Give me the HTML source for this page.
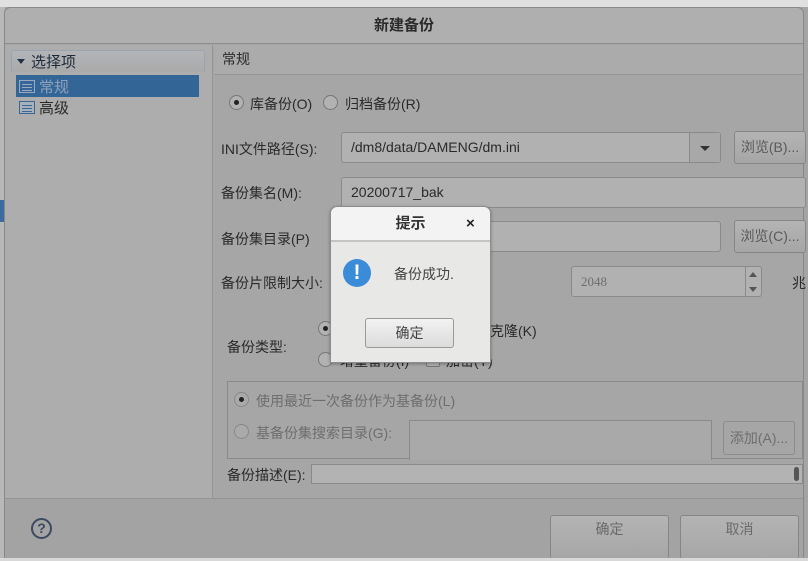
<!DOCTYPE html>
<html><head><meta charset="utf-8"><style>
*{box-sizing:border-box;margin:0;padding:0}
body{width:808px;height:561px;overflow:hidden;background:#a4a4a4;font-family:"Liberation Sans","Noto Sans CJK SC",sans-serif;font-size:14px;color:#2a2a2a;position:relative}
.a{position:absolute}
.field{position:absolute;background:#b1b1b1;border:1px solid #8a8a8a;border-radius:3px}
.btn{position:absolute;background:linear-gradient(#b4b4b4,#a6a6a6);border:1px solid #868686;border-radius:3px;color:#5a5a5a;text-align:center;font-size:14px}
.radio{position:absolute;width:15px;height:15px;border-radius:50%;border:1px solid #777;background:#b2b2b2}
.radio.on::after{content:"";position:absolute;left:4px;top:4px;width:5px;height:5px;border-radius:50%;background:#222}
.dis{color:#6e6e6e}
</style></head><body>
<div class="a" style="left:0;top:0;width:808px;height:7px;background:#e0e0e0"></div>
<div class="a" style="left:0;top:7px;width:5px;height:554px;background:#b8b8b8"></div>
<div class="a" style="left:0;top:200px;width:4px;height:22px;background:#3d6aa0"></div>
<div class="a" style="left:4px;top:7px;width:800px;height:552px;background:#a6a6a6;border:1px solid #888;border-radius:6px 6px 0 0"></div>
<div class="a" style="left:5px;top:8px;width:798px;height:36px;background:#afafaf;border-bottom:1px solid #8c8c8c;border-radius:6px 6px 0 0;text-align:center;line-height:36px;font-size:15px;font-weight:bold;color:#2b2b2b">新建备份</div>
<div class="a" style="left:5px;top:45px;width:208px;height:453px;background:#adadad;border-right:1px solid #959595"></div>
<div class="a" style="left:11px;top:50px;width:194px;height:22px;border:1px solid #9aa4b0;border-bottom:none;border-radius:3px 3px 0 0;background:linear-gradient(#b2b4b8,#aaaaaa)"></div>
<div class="a" style="left:17px;top:59px;width:0;height:0;border-left:4px solid transparent;border-right:4px solid transparent;border-top:5px solid #233247"></div>
<div class="a" style="left:31px;top:51px;font-size:15px;color:#1e2a3a">选择项</div>
<div class="a" style="left:16px;top:75px;width:183px;height:22px;background:#346597"></div>
<div class="a" style="left:19px;top:80px;width:16px;height:13px;border:1px solid #9ab;background:#35659a"></div>
<div class="a" style="left:22px;top:84px;width:10px;height:1px;box-shadow:0 3px #9ab,0 6px #9ab;background:#9ab"></div>
<div class="a" style="left:39px;top:76px;font-size:15px;color:#8fa2bb">常规</div>
<div class="a" style="left:19px;top:101px;width:16px;height:13px;border:1px solid #3a6697;background:#a8b0ba"></div>
<div class="a" style="left:22px;top:105px;width:10px;height:1px;box-shadow:0 3px #3a6697,0 6px #3a6697;background:#3a6697"></div>
<div class="a" style="left:39px;top:97px;font-size:15px">高级</div>
<div class="a" style="left:214px;top:45px;width:589px;height:30px;background:#ababab;border-bottom:1px solid #959595"></div>
<div class="a" style="left:222px;top:49px;font-size:14px">常规</div>
<div class="radio on" style="left:229px;top:95px"></div>
<div class="a" style="left:250px;top:94px">库备份(O)</div>
<div class="radio" style="left:323px;top:95px"></div>
<div class="a" style="left:345px;top:94px">归档备份(R)</div>
<div class="a" style="left:221px;top:139px">INI文件路径(S):</div>
<div class="field" style="left:341px;top:132px;width:380px;height:31px"></div>
<div class="a" style="left:689px;top:133px;width:31px;height:29px;border-left:1px solid #8a8a8a;background:#a8a8a8"></div>
<div class="a" style="left:700px;top:146px;width:0;height:0;border-left:5px solid transparent;border-right:5px solid transparent;border-top:5px solid #333"></div>
<div class="a" style="left:351px;top:139px">/dm8/data/DAMENG/dm.ini</div>
<div class="btn" style="left:734px;top:131px;width:72px;height:33px;line-height:31px">浏览(B)...</div>
<div class="a" style="left:221px;top:183px">备份集名(M):</div>
<div class="field" style="left:341px;top:177px;width:465px;height:31px"></div>
<div class="a" style="left:351px;top:184px">20200717_bak</div>
<div class="a" style="left:221px;top:229px">备份集目录(P)</div>
<div class="field" style="left:341px;top:221px;width:380px;height:31px"></div>
<div class="btn" style="left:734px;top:220px;width:72px;height:33px;line-height:31px">浏览(C)...</div>
<div class="a" style="left:221px;top:273px">备份片限制大小:</div>
<div class="field" style="left:571px;top:266px;width:191px;height:31px"></div>
<div class="a" style="left:745px;top:267px;width:16px;height:29px;border-left:1px solid #8a8a8a"></div>
<div class="a" style="left:749px;top:272px;border-left:4px solid transparent;border-right:4px solid transparent;border-bottom:5px solid #555"></div>
<div class="a" style="left:749px;top:287px;border-left:4px solid transparent;border-right:4px solid transparent;border-top:5px solid #555"></div>
<div class="a dis" style="left:581px;top:274px;font-family:'Liberation Serif',serif;font-size:13px">2048</div>
<div class="a" style="left:792px;top:273px">兆</div>
<div class="a" style="left:227px;top:337px">备份类型:</div>
<div class="radio on" style="left:318px;top:321px"></div>
<div class="a" style="left:490px;top:321px">克隆(K)</div>
<div class="radio" style="left:318px;top:352px"></div>
<div class="a" style="left:340px;top:351px">增量备份(I)</div>
<div class="a" style="left:426px;top:353px;width:14px;height:14px;border:1px solid #777;border-radius:2px;background:#b2b2b2"></div>
<div class="a" style="left:446px;top:351px">加密(Y)</div>
<div class="a" style="left:227px;top:381px;width:576px;height:78px;border:1px solid #8a8a8a"></div>
<div class="radio on" style="left:234px;top:392px;border-color:#888;background:#aaa"></div>
<div class="a dis" style="left:256px;top:391px">使用最近一次备份作为基备份(L)</div>
<div class="radio" style="left:234px;top:424px;border-color:#888;background:#aaa"></div>
<div class="a dis" style="left:256px;top:423px">基备份集搜索目录(G):</div>
<div class="a" style="left:409px;top:420px;width:303px;height:40px;border:1px solid #8a8a8a;border-bottom:none;background:#a9a9a9"></div>
<div class="a dis" style="left:723px;top:421px;width:72px;height:34px;border:1px solid #8c8c8c;border-radius:3px;line-height:32px;text-align:center">添加(A)...</div>
<div class="a" style="left:227px;top:465px">备份描述(E):</div>
<div class="field" style="left:311px;top:464px;width:492px;height:20px;border-radius:0;background:#b3b3b3"></div>
<div class="a" style="left:794px;top:467px;width:5px;height:14px;border-radius:3px;background:#555"></div>
<div class="a" style="left:5px;top:498px;width:798px;height:60px;background:#a3a3a3;border-top:1px solid #939393"></div>
<div class="a" style="left:31px;top:518px;width:21px;height:21px;border:2px solid #3b4a60;border-radius:50%;text-align:center;line-height:17px;font-weight:bold;color:#3b4a60;font-size:14px">?</div>
<div class="btn" style="left:550px;top:515px;width:119px;height:44px;line-height:26px;color:#6a6a6a;border-bottom:none">确定</div>
<div class="btn" style="left:680px;top:515px;width:119px;height:44px;line-height:26px;color:#6a6a6a;border-bottom:none">取消</div>
<div class="a" style="left:0;top:558px;width:808px;height:3px;background:#d8d8d8"></div>
<div class="a" style="left:330px;top:206px;width:161px;height:157px;background:#e8e8e7;border:1px solid #8c8c8c;border-radius:7px 7px 0 0;box-shadow:0 1px 3px rgba(0,0,0,.3)"></div>
<div class="a" style="left:331px;top:207px;width:159px;height:35px;background:#f3f3f3;border-bottom:2px solid #c4c4c4;border-radius:7px 7px 0 0;text-align:center;line-height:34px;font-size:15px;font-weight:bold;color:#333">提示</div>
<div class="a" style="left:466px;top:215px;font-size:15px;font-weight:bold;color:#222">×</div>
<div class="a" style="left:343px;top:259px;width:28px;height:28px;border-radius:50%;background:#3a8bd8;color:#fff;text-align:center;font-weight:bold;font-size:21px;line-height:28px">!</div>
<div class="a" style="left:394px;top:264px;color:#444">备份成功.</div>
<div class="a" style="left:365px;top:318px;width:89px;height:30px;border:1px solid #9a9a9a;border-radius:3px;background:linear-gradient(#f2f2f2,#dcdcdc);text-align:center;line-height:28px;color:#444">确定</div>
</body></html>
